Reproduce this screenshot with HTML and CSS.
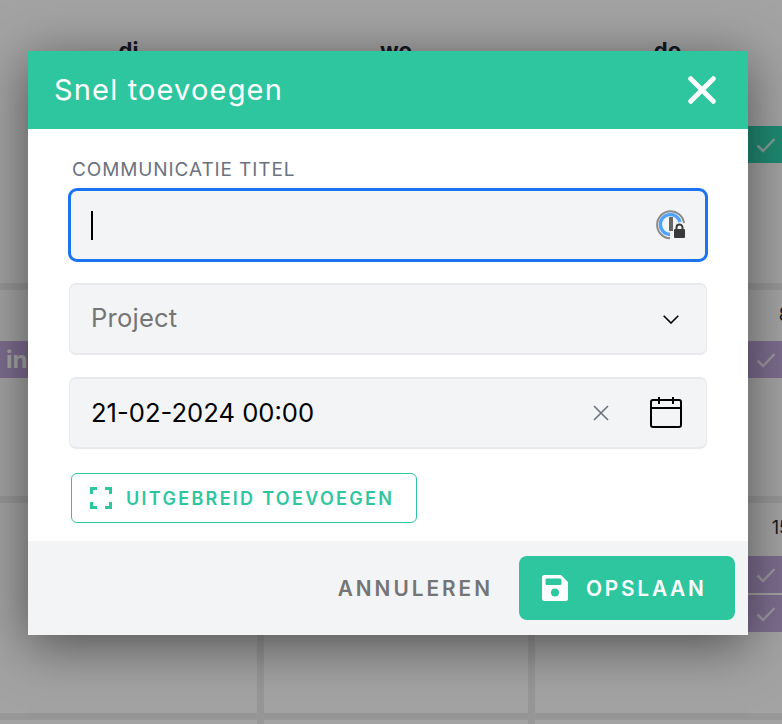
FILE: index.html
```html
<!DOCTYPE html>
<html lang="nl">
<head>
  <meta charset="UTF-8">
  <meta name="viewport" content="width=device-width, initial-scale=1.0">
  <title>Snel toevoegen</title>
  <link rel="stylesheet" href="styles.css">
</head>
<body>
  <!-- kalender achter de modal -->
  <div class="day-heads">
    <div class="day-head">di</div>
    <div class="day-head">wo</div>
    <div class="day-head">do</div>
  </div>

  <div class="calendar">
    <div class="cell"></div>
    <div class="cell"></div>
    <div class="cell">
      <div class="event event-teal event-first">
        <svg class="event-check" viewBox="0 0 20 16"><path d="M1.500 8.500 7 14 18.500 2"/></svg>
      </div>
    </div>

    <div class="cell">
      <div class="event event-purple event-second"><span class="event-text">in</span></div>
    </div>
    <div class="cell"></div>
    <div class="cell">
      <div class="day-number">8</div>
      <div class="event event-purple">
        <svg class="event-check" viewBox="0 0 20 16"><path d="M1.500 8.500 7 14 18.500 2"/></svg>
      </div>
    </div>

    <div class="cell"></div>
    <div class="cell"></div>
    <div class="cell">
      <div class="day-number">15</div>
      <div class="event event-purple event-third">
        <svg class="event-check" viewBox="0 0 20 16"><path d="M1.500 8.500 7 14 18.500 2"/></svg>
      </div>
      <div class="event event-purple">
        <svg class="event-check" viewBox="0 0 20 16"><path d="M1.500 8.500 7 14 18.500 2"/></svg>
      </div>
    </div>

    <div class="cell"></div>
    <div class="cell"></div>
    <div class="cell"></div>
  </div>

  <div class="overlay"></div>

  <div class="modal">
    <div class="modal-header">
      <span class="modal-title">Snel toevoegen</span>
      <svg class="close-icon" viewBox="0 0 26 26"><path d="M2.500 2.500 23.500 23.500M23.500 2.500 2.500 23.500"/></svg>
    </div>

    <div class="modal-body">
      <label class="field-label">COMMUNICATIE TITEL</label>
      <div class="field field-focus">
        <span class="caret"></span>
        <svg class="pw-icon" viewBox="0 0 30 30">
          <path class="pw-ring" d="M28 13A13.500 13.500 0 1 0 14 28.300"/>
          <path class="pw-arc" d="M24 12A10 10 0 1 0 14 24.500"/>
          <rect class="pw-bar" x="13" y="7" width="4" height="14"/>
          <path class="pw-shackle" d="M20.500 20v-2.500a3 3 0 0 1 6 0v2.500"/>
          <rect class="pw-lock" x="18" y="19" width="11" height="9" rx="1"/>
        </svg>
      </div>

      <div class="field field-select">
        <span class="placeholder">Project</span>
        <svg class="chevron-icon" viewBox="0 0 16 9"><path d="M.7.7 8 8 15.300.7"/></svg>
      </div>

      <div class="field field-date">
        <span class="date-value">21-02-2024 00:00</span>
        <svg class="clear-icon" viewBox="0 0 16 16"><path d="M1 1 15 15M15 1 1 15"/></svg>
        <svg class="calendar-icon" viewBox="0 0 32 32">
          <rect x="1" y="3" width="30" height="27" rx="2"/>
          <path d="M1 11H31M9 0V7M23 0V7"/>
        </svg>
      </div>

      <button class="btn-outline">
        <svg class="expand-icon" viewBox="0 0 22 22"><path d="M1.500 7V1.500H7M15 1.500H20.500V7M20.500 15V20.500H15M7 20.500H1.500V15"/></svg>
        UITGEBREID TOEVOEGEN
      </button>
    </div>

    <div class="modal-footer">
      <button class="btn-cancel">ANNULEREN</button>
      <button class="btn-save">
        <svg class="save-icon" viewBox="0 0 26 26">
          <path fill-rule="evenodd" d="M2.500 0H19L26 7V23.500A2.500 2.500 0 0 1 23.500 26H2.500A2.500 2.500 0 0 1 0 23.500V2.500A2.500 2.500 0 0 1 2.500 0ZM5 3.500A1.500 1.500 0 0 0 3.500 5V8.500A1.500 1.500 0 0 0 5 10H18A1.500 1.500 0 0 0 19.500 8.500V5A1.500 1.500 0 0 0 18 3.500ZM13 13.500A4 4 0 1 0 13 21.500 4 4 0 1 0 13 13.500Z"/>
        </svg>
        OPSLAAN
      </button>
    </div>
  </div>
</body>
</html>
```

FILE: styles.css
```css
* {
  box-sizing: border-box;
}

body {
  margin: 0;
  width: 782px;
  height: 724px;
  overflow: hidden;
  position: relative;
  font-family: Inter, "Liberation Sans", sans-serif;
  background: #fff;
}

.day-heads {
  width: 800px;
  height: 72px;
  display: grid;
  grid-template-columns: 257px 264px 265px;
  column-gap: 7px;
  background: #fbfbfb;
}

.day-head {
  padding-top: 37px;
  font-size: 22px;
  font-weight: 700;
  line-height: 26px;
  color: #1f2937;
  text-align: center;
}

.calendar {
  width: 800px;
  height: 652px;
  display: grid;
  grid-template-columns: 257px 264px 265px;
  grid-template-rows: 211px 206px 210px 4px;
  column-gap: 7px;
  row-gap: 7px;
  background: #e8e8e8;
}

.cell {
  background: #fbfbfb;
  padding-top: 15px;
  overflow: hidden;
}

.day-number {
  height: 36px;
  padding-right: 10px;
  text-align: right;
  font-size: 18px;
  line-height: 20px;
  color: #1f2937;
}

.event {
  height: 37px;
  margin-bottom: 2px;
  display: flex;
  align-items: center;
  justify-content: flex-end;
  padding-right: 24px;
}

.event-first {
  margin-top: 39px;
}

.event-second {
  margin-top: 36px;
  justify-content: flex-start;
  padding-left: 6px;
}

.event-third {
  margin-top: 2px;
}

.event-teal {
  background: #30d5b0;
}

.event-purple {
  background: #c0a8dc;
}

.event-text {
  color: #fff;
  font-size: 24px;
  font-weight: 700;
}

.event-check {
  width: 20px;
  height: 16px;
  fill: none;
  stroke: #fff;
  stroke-width: 2.500;
  opacity: 0.75;
}

.overlay {
  position: absolute;
  top: 0;
  left: 0;
  right: 0;
  bottom: 0;
  background: rgba(0, 0, 0, 0.35);
}

.modal {
  position: absolute;
  top: 51px;
  left: 28px;
  width: 720px;
  height: 584px;
  display: flex;
  flex-direction: column;
  background: #fff;
  box-shadow: 0 10px 50px rgba(0, 0, 0, 0.5);
}

.modal-header {
  height: 78px;
  flex: none;
  display: flex;
  align-items: center;
  justify-content: space-between;
  padding: 0 32px 0 26px;
  background: #2ec69f;
  color: #fff;
}

.modal-title {
  padding-bottom: 2px;
  font-size: 29px;
  letter-spacing: 1.170px;
}

.close-icon {
  width: 28px;
  height: 28px;
  fill: none;
  stroke: #fff;
  stroke-width: 4.500;
  stroke-linecap: round;
}

.modal-body {
  flex: 1;
  display: flex;
  flex-direction: column;
  align-items: flex-start;
  padding: 30px 40px 0 41px;
}

.field-label {
  margin-left: 3px;
  margin-bottom: 7px;
  font-size: 19px;
  line-height: 22px;
  letter-spacing: 0.900px;
  color: #6b7280;
}

.field {
  width: 638px;
  height: 72px;
  margin-bottom: 22px;
  display: flex;
  align-items: center;
  padding: 0 21px;
  background: #f3f4f6;
  border-style: solid;
  border-color: #e8e9ec;
  border-width: 2px 1px;
  border-radius: 7px;
  font-size: 25.600px;
}

.field-focus {
  width: 640px;
  height: 74px;
  margin-left: -1px;
  margin-bottom: 21px;
  justify-content: space-between;
  border: 3px solid #1a73f0;
  border-radius: 9px;
  padding: 0 19px 0 20px;
}

.caret {
  width: 2px;
  height: 29px;
  background: #000;
}

.pw-icon {
  width: 30px;
  height: 30px;
  fill: none;
}

.pw-ring {
  stroke: #8a8a8a;
  stroke-width: 2;
}

.pw-arc {
  stroke: #4da3ff;
  stroke-width: 3.500;
}

.pw-bar,
.pw-lock {
  fill: #3a3a3a;
}

.pw-bar {
  fill: #666;
}

.pw-shackle {
  stroke: #3a3a3a;
  stroke-width: 2;
}

.placeholder {
  padding-bottom: 3px;
  color: #757575;
  letter-spacing: 0.200px;
}

.field-select {
  justify-content: space-between;
}

.chevron-icon {
  width: 16px;
  height: 9px;
  margin-right: 6px;
  fill: none;
  stroke: #000;
  stroke-width: 1.600;
}

.field-date {
  margin-bottom: 24px;
}

.date-value {
  flex: 1;
  padding-bottom: 2px;
  color: #000;
}

.clear-icon {
  width: 16px;
  height: 16px;
  margin-right: 41px;
  fill: none;
  stroke: #6b7280;
  stroke-width: 1.600;
}

.calendar-icon {
  width: 32px;
  height: 32px;
  margin-right: 3px;
  fill: none;
  stroke: #000;
  stroke-width: 2;
}

.btn-outline {
  width: 346px;
  height: 50px;
  margin-left: 2px;
  display: flex;
  align-items: center;
  gap: 14px;
  padding: 0 18px;
  background: #fff;
  border: 1px solid #2ec69f;
  border-radius: 6px;
  font-family: inherit;
  font-size: 18px;
  font-weight: 600;
  letter-spacing: 2.300px;
  color: #2ec69f;
}

.expand-icon {
  width: 22px;
  height: 22px;
  fill: none;
  stroke: #2ec69f;
  stroke-width: 3;
}

.modal-footer {
  height: 94px;
  flex: none;
  display: flex;
  align-items: center;
  justify-content: flex-end;
  gap: 26px;
  padding: 0 13px 0 0;
  background: #f3f4f6;
}

.btn-cancel,
.btn-save {
  border: none;
  font-family: inherit;
  font-size: 20.800px;
  font-weight: 600;
  letter-spacing: 2.800px;
}

.btn-cancel {
  background: none;
  padding: 0;
  letter-spacing: 3px;
  color: #757575;
}

.btn-save {
  width: 216px;
  height: 64px;
  display: flex;
  align-items: center;
  gap: 18px;
  padding: 0 23px;
  background: #2ec69f;
  border-radius: 8px;
  color: #fff;
}

.save-icon {
  width: 26px;
  height: 26px;
  fill: #fff;
}
```
